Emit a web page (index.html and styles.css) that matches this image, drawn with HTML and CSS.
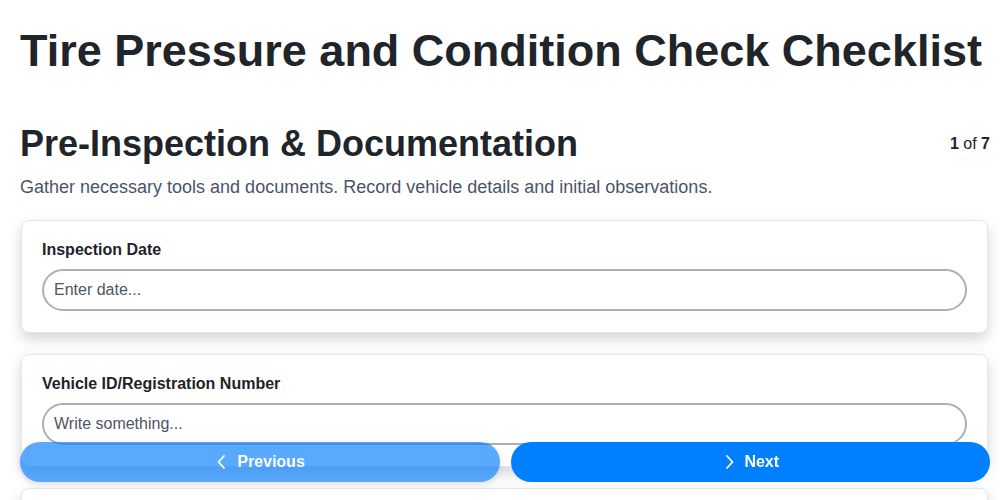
FILE: index.html
```html
<!DOCTYPE html>
<html lang="en">
<head>
    <meta charset="UTF-8">
    <meta name="viewport" content="width=device-width, initial-scale=1.0">
    <title>Tire Pressure and Condition Check Checklist</title>
    <link rel="stylesheet" href="styles.css">
</head>
<body>

    <div class="container">
        <h1 class="page-title">Tire Pressure and Condition Check Checklist</h1>

        <div class="step-header">
            <h2>Pre-Inspection &amp; Documentation</h2>
            <span class="step-count"><b>1</b> of <b>7</b></span>
        </div>
        <p class="step-desc">Gather necessary tools and documents. Record vehicle details and initial observations.</p>

        <div class="field-card">
            <label for="inspectionDate">Inspection Date</label>
            <input type="text" id="inspectionDate" placeholder="Enter date...">
        </div>

        <div class="field-card">
            <label for="vehicleId">Vehicle ID/Registration Number</label>
            <input type="text" id="vehicleId" placeholder="Write something...">
        </div>

        <div class="field-card">
            <label for="odometer">Odometer Reading</label>
            <input type="text" id="odometer" placeholder="Write something...">
        </div>
    </div>

    <div class="nav-buttons">
        <button class="nav-btn prev-btn">
            <svg width="16" height="16" viewBox="0 0 16 16" fill="none" stroke="currentColor" stroke-width="1.8" stroke-linecap="round" stroke-linejoin="round"><path d="M10 2 4.5 8l5.5 6"/></svg>
            Previous
        </button>
        <button class="nav-btn next-btn">
            <svg width="16" height="16" viewBox="0 0 16 16" fill="none" stroke="currentColor" stroke-width="1.8" stroke-linecap="round" stroke-linejoin="round"><path d="M6 2l5.5 6L6 14"/></svg>
            Next
        </button>
    </div>

</body>
</html>
```

FILE: styles.css
```css
/* General Styles */
body {
    font-family: "Liberation Sans", Arial, sans-serif;
    margin: 0;
    padding: 0;
    background-color: #ffffff;
    color: #212529;
}

.container {
    padding: 0 10px 80px 20px;
}

.page-title {
    font-size: 45px;
    font-weight: bold;
    margin: 0;
    padding: 25px 0 0;
    line-height: 52px;
    white-space: nowrap;
}

.step-header {
    display: flex;
    justify-content: space-between;
    align-items: center;
    margin-top: 46px;
}

h2 {
    margin: 0;
    font-size: 36px;
    line-height: 42px;
}

.step-count {
    font-size: 16px;
    color: #212529;
}

.step-desc {
    margin: 12px 0 22px;
    font-size: 18px;
    color: #4a5568;
}

.field-card {
    background: white;
    border: 1px solid #e6e7eb;
    border-radius: 8px;
    padding: 20px 20px 21px;
    margin: 0 2px 21px 1px;
    box-shadow: 0 6px 14px rgba(0, 0, 0, 0.17);
}

.field-card label {
    display: block;
    font-weight: bold;
    font-size: 16px;
    margin-bottom: 10px;
    color: #1f2329;
}

.field-card input[type="text"] {
    width: 100%;
    box-sizing: border-box;
    height: 42px;
    padding: 0 10px;
    border: 2px solid #a8b1ba;
    border-radius: 21px;
    font-family: inherit;
    font-size: 16px;
    color: #333;
    outline: none;
}

.field-card input::placeholder {
    color: #4f5562;
}

/* Navigation */
.nav-buttons {
    position: fixed;
    left: 20px;
    right: 10px;
    bottom: 18px;
    display: flex;
    gap: 11px;
}

.nav-btn {
    flex: 1;
    height: 40px;
    border: none;
    border-radius: 20px;
    color: white;
    font-family: inherit;
    font-size: 16px;
    font-weight: bold;
    display: flex;
    align-items: center;
    justify-content: center;
    gap: 7px;
    cursor: pointer;
}

.prev-btn {
    background-color: rgba(0, 123, 255, 0.65);
    box-shadow: 0 2px 6px rgba(0, 0, 0, 0.12);
}

.next-btn {
    background-color: #007fff;
}
```
